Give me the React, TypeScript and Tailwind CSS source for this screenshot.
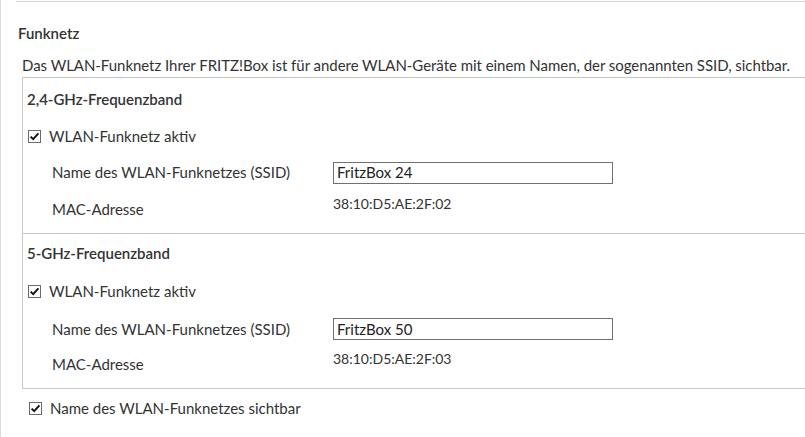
import React from "react";

type Band = {
  title: string;
  ssid: string;
  mac: string;
};

const bands: Band[] = [
  { title: "2,4-GHz-Frequenzband", ssid: "FritzBox 24", mac: "38:10:D5:AE:2F:02" },
  { title: "5-GHz-Frequenzband", ssid: "FritzBox 50", mac: "38:10:D5:AE:2F:03" },
];

// row heights differ slightly between the two bands in the original
const rows = [
  { head: "h-[42px]", check: "h-[33px]", name: "h-[39px]", mac: "h-[34px]" },
  { head: "h-[38px]", check: "h-[39px]", name: "h-[36px]", mac: "h-[34px]" },
];

function CheckBox() {
  return (
    <svg width="13" height="13" viewBox="0 0 13 13" className="shrink-0">
      <rect x="0.5" y="0.5" width="12" height="12" fill="#fff" stroke="#6b6b6b" />
      <path d="M2.6 6.6 L5.2 9.2 L10.4 3.4" fill="none" stroke="#111" strokeWidth="1.9" />
    </svg>
  );
}

function CheckRow({ label, className }: { label: string; className: string }) {
  return (
    <div className={`flex items-center ${className}`}>
      <CheckBox />
      <span className="ml-[8px]">{label}</span>
    </div>
  );
}

export default function App() {
  return (
    <div
      className="h-[437px] w-[805px] overflow-hidden border-l border-[#dcdcdc] bg-white pl-[15px] text-[15px] text-[#333]"
      style={{ fontFamily: "Lato, 'Noto Sans', sans-serif" }}
    >
      <div className="mt-[1px] border-t border-[#d6d6d6] pl-[2px]">
        <div className="flex h-[56px] items-center pt-[6px] font-semibold">Funknetz</div>
        <div className="ml-[4px] h-[19px] whitespace-nowrap leading-[15px] tracking-[-0.04px]">
          Das WLAN-Funknetz Ihrer FRITZ!Box ist für andere WLAN-Geräte mit einem Namen, der sogenannten SSID, sichtbar.
        </div>

        <div className="ml-[4px] w-[800px] border border-r-0 border-[#c8c8c8]">
          {bands.map((b, i) => (
            <div key={b.title} className={i > 0 ? "border-t border-[#c8c8c8]" : ""}>
              <div className={`flex items-center pl-[4px] font-semibold ${rows[i].head}`}>{b.title}</div>
              <CheckRow label="WLAN-Funknetz aktiv" className={`pl-[5px] ${rows[i].check}`} />
              <div className={`flex items-center pl-[29px] ${rows[i].name}`}>
                <span className="w-[281px]">Name des WLAN-Funknetzes (SSID)</span>
                <input
                  readOnly
                  value={b.ssid}
                  className="h-[22px] w-[280px] border border-[#707070] px-[3px] text-[15px] text-[#222] outline-none"
                />
              </div>
              <div className={`flex items-center pl-[29px] ${rows[i].mac}`}>
                <span className="w-[281px]">MAC-Adresse</span>
                <span className="mb-[11px] text-[14px]">{b.mac}</span>
              </div>
              <div className="h-[7px]" />
            </div>
          ))}
        </div>

        <CheckRow label="Name des WLAN-Funknetzes sichtbar" className="h-[38px] pl-[11px]" />
      </div>
    </div>
  );
}
